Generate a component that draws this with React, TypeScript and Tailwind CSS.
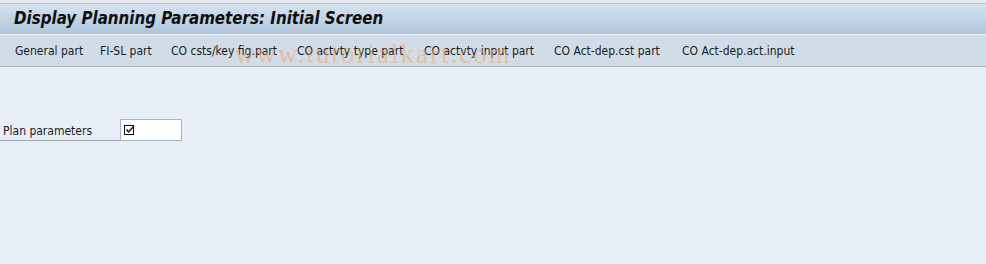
import { useState } from 'react';

const toolbarItems = [
  { label: 'General part', w: 'w-[85px]' },
  { label: 'FI-SL part', w: 'w-[71px]' },
  { label: 'CO csts/key fig.part', w: 'w-[126px]' },
  { label: 'CO actvty type part', w: 'w-[127px]' },
  { label: 'CO actvty input part', w: 'w-[130px]' },
  { label: 'CO Act-dep.cst part', w: 'w-[128px]' },
  { label: 'CO Act-dep.act.input', w: 'w-auto' },
];

export default function App() {
  const [checked] = useState(true);

  return (
    <div className="relative w-[986px] h-[264px] overflow-hidden bg-[#e8eef5] font-['DejaVu_Sans_Condensed',sans-serif]">
      {/* title bar */}
      <div className="h-[3px] bg-[#e4e8ed]" />
      <div className="h-[1px] bg-[#b8c2cc]" />
      <div className="h-[30px] bg-gradient-to-b from-[#d6e3ef] to-[#afc5dc] flex items-center pl-[14px]">
        <h1 className="text-[16.8px] font-bold italic text-[#0f0f0f] font-['DejaVu_Sans_Condensed',sans-serif]">
          Display Planning Parameters: Initial Screen
        </h1>
      </div>
      <div className="h-[1px] bg-[#eef3f8]" />

      {/* application toolbar */}
      <div className="h-[32px] bg-[#d0dde8] flex items-center pl-[15px] border-b border-[#a4b1bf]">
        {toolbarItems.map((t) => (
          <button key={t.label} className={`${t.w} text-left text-[12px] text-[#1b1b1b] leading-none whitespace-nowrap`}>
            {t.label}
          </button>
        ))}
      </div>

      {/* watermark */}
      <div className="absolute left-[235px] top-[34px] text-[27px] text-[#f0a860] opacity-50 font-['Liberation_Serif',serif] tracking-[2px] pointer-events-none whitespace-nowrap">
        www.tutorialkart.com
      </div>

      {/* body */}
      <div className="pt-[52px]">
        <div className="flex items-end">
          <label className="w-[120px] border-b border-[#a0aab6] pl-[3px] text-[12px] text-[#1b1b1b]">
            Plan parameters
          </label>
          <div className="w-[62px] h-[22px] bg-white border border-[#a9b3bd] flex items-center pl-[3px]">
            {checked && (
              <svg width="11" height="11" viewBox="0 0 11 11">
                <rect x="0.5" y="0.5" width="9" height="9" fill="none" stroke="#111" strokeWidth="1" />
                <path d="M2.5 4.5 L4.5 7 L10 1" fill="none" stroke="#111" strokeWidth="1.4" />
              </svg>
            )}
          </div>
        </div>
      </div>
    </div>
  );
}
